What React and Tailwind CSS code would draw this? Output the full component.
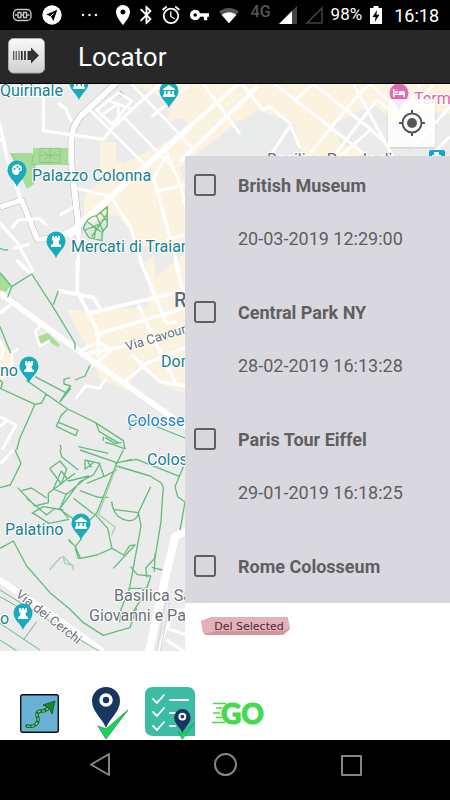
import React from 'react';

const places = [
  { name: "British Museum", date: "20-03-2019 12:29:00" },
  { name: "Central Park NY", date: "28-02-2019 16:13:28" },
  { name: "Paris Tour Eiffel", date: "29-01-2019 16:18:25" },
  { name: "Rome Colosseum" },
];

const StatusBar = () => (
  <div className="flex h-[30px] items-center bg-black pl-3 pr-[11px] font-['Roboto',sans-serif] text-white">
    <div className="flex items-center gap-[10px]">
      <svg className="w-5 h-5" viewBox="0 0 20 20" fill="none" stroke="#c9c9c9" strokeWidth="1.3">
        <rect x="1.5" y="4.5" width="17.5" height="11" rx="4" />
        <path d="M3 10h3M14.500 10h3M6 7.500h3v5H6zM11.500 7.500h3v5h-3zM9 10h2.500" />
      </svg>
      <svg className="w-5 h-5" viewBox="0 0 20 20">
        <circle cx="10" cy="10" r="9.7" fill="#fff" />
        <path d="M15.300 4.800 4.300 9.500l4.500 1.900 2.600 4.600z" fill="#000" />
        <path d="m8.600 11.400 3-3" stroke="#fff" strokeWidth="1" />
      </svg>
      <svg className="w-[34px] h-5" viewBox="0 0 34 20" fill="#fff">
        <circle cx="11" cy="10" r="1.2" />
        <circle cx="17.500" cy="10" r="1.2" />
        <circle cx="24" cy="10" r="1.2" />
      </svg>
      <svg className="w-[14px] h-5" viewBox="5 2 14 20" fill="#fff">
        <path d="M12 2C8.130 2 5 5.130 5 9c0 5.250 7 13 7 13s7-7.750 7-13c0-3.870-3.130-7-7-7zm0 9.500a2.500 2.500 0 1 1 0-5 2.500 2.500 0 0 1 0 5z" />
      </svg>
      <svg className="w-3 h-5" viewBox="5 2 13 20" fill="#fff">
        <path d="M17.710 7.710 12 2h-1v7.590L6.410 5 5 6.410 10.590 12 5 17.590 6.410 19 11 14.410V22h1l5.710-5.710-4.300-4.290 4.300-4.290zM13 5.830l1.880 1.880L13 9.590V5.830zm1.880 10.460L13 18.170v-3.760l1.880 1.880z" />
      </svg>
      <svg className="w-[18px] h-5" viewBox="2 2 20 20" fill="#fff">
        <path d="m22 5.720-4.600-3.860-1.290 1.530 4.600 3.860L22 5.720zM7.880 3.390 6.600 1.860 2 5.710l1.290 1.530 4.590-3.850zM12.500 8H11v6l4.750 2.850.750-1.230-4-2.370V8zM12 4a9 9 0 1 0 0 18 9 9 0 0 0 0-18zm0 16a7 7 0 1 1 0-14 7 7 0 0 1 0 14z" />
      </svg>
      <svg className="w-[19px] h-5" viewBox="1 2 22 20" fill="#fff">
        <path d="M12.650 10A5.990 5.990 0 0 0 7 6c-3.310 0-6 2.690-6 6s2.690 6 6 6a5.990 5.990 0 0 0 5.650-4H17v4h4v-4h2v-4H12.650zM7 14a2 2 0 1 1 0-4 2 2 0 0 1 0 4z" />
      </svg>
      <svg className="w-[20px] h-5" viewBox="0 0 22 20">
        <path d="M0 6.500C6 .800 16 .800 22 6.500L11 19z" fill="#555" />
        <path d="M3 10C7.500 6 14.500 6 19 10l-8 9z" fill="#fff" />
      </svg>
    </div>
    <div className="ml-auto flex items-center gap-2">
      <span className="h-5 text-base font-medium leading-[14px] text-[#555]">4G</span>
      <svg className="w-[18px] h-[18px]" viewBox="0 0 18 18">
        <path d="M0 18 18 0v18z" fill="#444" />
        <path d="M0 18 13 5v13z" fill="#fff" />
      </svg>
      <svg className="w-[18px] h-[18px]" viewBox="0 0 18 18" fill="none" stroke="#444" strokeWidth="1.5">
        <path d="M2 17 17 2v15z" />
      </svg>
      <span className="text-[17px]">98%</span>
      <svg className="w-3 h-[18px]" viewBox="0 0 12 18">
        <path d="M3.500 0h5v2H12v16H0V2h3.500z" fill="#fff" />
        <path d="M7 4 2.500 11h3L4.800 16 9.500 8.800h-3z" fill="#000" />
      </svg>
      <span className="pl-1 text-[18px]">16:18</span>
    </div>
  </div>
);

const AppBar = () => (
  <header className="flex h-[54px] items-center gap-8 border-b border-black bg-[#282828] px-2">
    <svg className="w-[38px] h-[38px]" viewBox="0 0 38 38" aria-hidden="true">
      <defs>
        <linearGradient id="tile" x1="0" y1="0" x2="0" y2="1">
          <stop offset="0" stopColor="#fafafa" />
          <stop offset="1" stopColor="#cfcfcf" />
        </linearGradient>
      </defs>
      <rect x="0.500" y="0.500" width="36" height="34.500" rx="5" fill="url(#tile)" stroke="#aaa" />
      <path d="M5.700 13v9M8.200 13v9M11 13v9" stroke="#333" strokeWidth="1" />
      <path d="M13.800 13v9M17 13v9" stroke="#333" strokeWidth="1.800" />
      <path d="M19.500 13H23V9.500l8 8-8 8V22h-3.500z" fill="#333" />
    </svg>
    <h1 className="font-['Roboto',sans-serif] text-[26px] leading-8 text-white">Locator</h1>
  </header>
);

const Pin = ({ x, y, color = "#16abbd", children }) => (
  <g transform={`translate(${x} ${y})`}>
    <path d="M0 16C-2 10-9.500 6-9.500-1a9.500 9.500 0 0 1 19 0C9.500 6 2 10 0 16z" fill={color} />
    <g fill="#fff">{children}</g>
  </g>
);

const Museum = () => (
  <path d="M-6-3 0-7 6-3v1H-6zM-5-1h2v3h1.500v-3h3v3H3v-3h2v4H-5zM-6 3H6v2H-6z" />
);
const Rook = () => <path d="M-4-6h2v1.500h1V-6h2v1.500h1V-6h2v4L2.500-1 3 2l2 1v2H-5V3l2-1 .500-3L-4-2z" />;

const MapView = () => (
  <svg
    className="absolute inset-0 h-full w-full font-['Roboto',sans-serif]"
    viewBox="0 84 450 567"
    preserveAspectRatio="xMinYMin slice"
    role="img"
    aria-label="Map of Rome"
  >
    <rect y="84" width="450" height="567" fill="#ebebeb" />

    {/* built-up areas */}
    <g fill="#fbf2df">
      <path d="M133 84h317v30l-35-6-12 20-30-24-40 20 8 20 26 8-30 14H220l40-34-20-12-60 48 6 20v60l-42-2-28-32-32 10 0-28 16-14V142h16v18l8 4 22-12 12-6 34-18-10-10-16 4 8-20z" />
      <path d="m66 310 28 0 54-3 2-25 36-30v142l-20-8-30-20-8 24-28-10-10-28z" />
      <path d="m0 344 12 8 4 22-16 6zM145 262l10-6v24h-8z" />
    </g>
    <path d="m190 160 68-50 36 14 10 34-30 10h-84z" fill="#e9eaea" />

    {/* parks */}
    <g fill="#a9dc98">
      <path d="M10 153h23v-5h35v16H36l-2 20-7 5z" />
      <path d="m0 273 11 12-5 7-6-2z" />
      <path d="m37 337 11-4 12 12-2 2-10-6-6 4z" />
    </g>
    <path d="M84 222 90 227l12-8 6-12-1 21-5 12-16-4z" fill="#dbe8db" />
    <path d="m120 90 4 4-1 3-4-1z" fill="#8cc8ee" />

    {/* streets */}
    <g transform="translate(0 80) scale(.33333)" fill="none" stroke="#fff" strokeLinejoin="round">
      <g stroke="#b9b9b9" strokeWidth="21">
        <path d="M350 8 242 108Q213 145 214 185v65l20 175v40" />
        <path d="M0 382 64 360l48 118 60-4" strokeWidth="19" />
      </g>
      <path d="M350 8 242 108Q213 145 214 185v65l20 175v40" strokeWidth="18" />
      <path d="M0 382 64 360l48 118 60-4 62-32" strokeWidth="16" />
      <path d="M570 140 235 436 205 470" strokeWidth="18" />
      <path d="M130 12v140l180 26 32-40L480 12M0 130 20 230l42 130M0 180h12M175 70l22 16 18 40" strokeWidth="10" />
      <path d="m270 90 165 165M372 112l135 140M395 12l180 190M290 90l65-52 40 25-60 70zM300 110l55-40v65M320 60l75 28" strokeWidth="8" />
      <path d="m455 110 110-90M230 325l100 24 60 90 42 130M460 290l80 290M500 222l40 90 30 120M455 305l50-90M465 335l100-22M500 480l70-20" strokeWidth="9" />
      <path d="m180 405 50-28M0 430l50 55 50 90M35 445l18-24 65-5 24 22M40 505l50-12M235 460v110" strokeWidth="9" />
    </g>
    <g transform="translate(0 260) scale(.33333)" fill="none" stroke="#fff" strokeLinejoin="round">
      <path d="M0 100 260 290 570 510" strokeWidth="17" />
      <path d="M232 0v95l35 65 28 60v70M50 0l45 45M0 160l30-25M175 92l105 20 20 32M265 160l300-70M285 225l280-85" strokeWidth="11" />
      <path d="m240 285 150-30 180-55M235 275l60-30 40 25-60 50M420 0l80 190 30-5M525 0l30 120M415 135l55 120 60 120M395 285l85 80 90 15M370 370l70-60 120-50" strokeWidth="10" />
      <path d="m120 200-15 14 15 45 30-18M320 355l-22 30-40-8-32 40M0 240l10 30-8 30M35 330v-50l20-14" strokeWidth="8" />
      <path d="m0 470 48 25-42 75M0 500l20-18" strokeWidth="9" />
    </g>
    <g transform="translate(0 450) scale(.33333)" fill="none" stroke="#fff" strokeLinejoin="round">
      <path d="M575 235 525 260 490 410 445 615" strokeWidth="24" />
      <path d="M-5 388 150 490l160 115" strokeWidth="18" />
      <path d="M0 42 40 0M470 615l30-80 60 20M500 540l20-60h50M500 570l60 40" strokeWidth="9" />
      <path d="m500 440-30 170M510 450l-30 160" stroke="#d5d5d5" strokeWidth="3" />
    </g>
    <g transform="translate(180 80) scale(.33333)" fill="none" stroke="#fff" strokeLinejoin="round">
      <path d="M0 165 175 12M0 245 235 18" strokeWidth="12" />
      <path d="m70 12 110 150M185 12l65 78 20-10 60 50 30 75M285 12l230 180 50 40M345 60 400 12M400 12l165 130 60 55M520 12l120 220M275 220l60-90M390 220l140-170 40-38M460 230l130-170M570 12l100 90 50-90M480 230l90-80M590 60l40 30M700 200l110-120M760 12l-80 110M750 230l60-60" strokeWidth="9" />
    </g>

    {/* footpaths */}
    <g fill="none" stroke="#62bd7b" strokeLinejoin="round">
      <g transform="translate(0 80) scale(.33333)" strokeWidth="4">
        <path d="M250 445q10-35 40-38l32-27v58l-16 18v26l-40-10zM262 425l40 30M290 407l20 50M275 470l45-65M255 450l50-20M300 395l22 30M282 480l6-40" />
        <path d="M120 205h60v42h-60zM130 215l40 24M170 215l-40 24M150 205v42M120 226h60M100 225l-5 28h115M35 220l15 30" strokeWidth="2" stroke="#83bd7c" />
        <path d="M0 505q15 8 24 4" />
      </g>
      <g transform="translate(0 260) scale(.33333)" strokeWidth="4">
        <path d="m0 38 35 42-12 32M35 80l60-38 60 92 70 115v20M175 92l-15 42M0 200l32 80" />
        <path d="m78 360 60 42 65 45 82 40 85 55 5 25-40-15-20-5M105 350l92 48-18 28M197 398l15-20-20-6v-14l18-5M212 385l-30 38M225 360l30-12 15-32M0 385l105 48 20-4 14-28M105 433l-45 100-10 37M0 360l8 8-6 18M203 447l-20 20-14 32 58 28 7-16-58-24M288 490l10 25 60 35M315 532l30 18 20-2M235 560l90 20M180 555l4 15M390 510v-25l30-5 150 60M310 530v12" />
      </g>
      <g transform="translate(0 450) scale(.33333)" strokeWidth="4">
        <path d="m45 0 18 40-32 65-31 8M180 0l5 20 50 40M240 0l110 38 60-10 130 52M370 0l-20 40-60 150-40 40M395 28l-50 12M350 48l100 30 30 18q14 10 8 38l-5 80-18 110-28 30 4 28M550 50l-25 60 8 30 22 16-15 85" />
        <path d="M150 55l30-22 20 24-16 45-34-45zM184 62l-24 55 40 16 66-55-60 15-22-30M225 70l-80 60v28l-40 10-52-55M65 122l30-8 45 30M80 145l60 50 25-20M95 190l35-20 60 10M97 188l50 32 60-12M180 175l60-80 40-20 20-35-45-10v28l25-20M175 175l50 35M200 130l-20 45 25 30M260 30l15 22M300 45l12 35 38-20M220 145l60 46M240 122l55 20 30 0M310 80l-50 20" />
        <path d="M283 190l40 45 13 60 35 20 18-28M336 295l-45 20-50 10-15-35M245 265l-19 25-20-22M205 270l10 10M245 325h-10l-9-30M389 287l16-2-65 70M335 155q5 50 50 57 25 2 32-25M340 178l75 10 37-78M415 188l8 40-35 190-25 60-4 40M392 350l20 24 40 4-15 50-40 60M385 415l55 0 12-36M465 310l-2 55M455 352l32 8" />
        <path d="m0 295 40-22 40 75 70 80 60 50 40 40 60 38 50-15 30-8 20-60" />
        <path d="M0 420l200 125 100 60M0 440l70 40M0 520l120 80M110 515l-40 55M0 570l50 32" strokeWidth="3" />
        <path d="m148 360 32-36 10-4 30 30v12M190 325l5 16 25 5M350 48l-55 145 50 38-10 25" stroke="#a5cfae" />
      </g>
    </g>

    <path d="M431 150h12q2 0 2 2v12h-16v-12q0-2 2-2z" fill="#0ea5dc" />
    <path d="M434 152h5v3h-5zM432 155h9v1h-9z" fill="#fff" />

    <g stroke="#fff" strokeWidth="2" strokeLinejoin="round" style={{ paintOrder: "stroke" }}>
      <g fill="#16818f" fontSize="16">
        <text x="0" y="96">Quirinale</text>
        <text x="32" y="181">Palazzo Colonna</text>
        <text x="71" y="252">Mercati di Traian</text>
        <text x="161" y="367">Dom</text>
        <text x="0" y="376">no</text>
        <text x="147" y="465">Colos</text>
        <text x="5" y="535">Palatino</text>
        <text x="0" y="624">o</text>
      </g>
      <text x="127" y="426" fill="#1a84bd" fontSize="16">Colosse</text>
      <text x="174" y="307" fill="#5a6a7d" fontSize="20" fontWeight="500">R</text>
      <g fill="#666f77">
        <text x="114" y="601" fontSize="16">Basilica Sa</text>
        <text x="89" y="621" fontSize="16">Giovanni e Pa</text>
        <text x="267" y="165" fontSize="16">Basilica Papale di</text>
        <text transform="translate(127 351) rotate(-17)" fontSize="13">Via Cavour</text>
        <text transform="translate(15 596) rotate(38)" fontSize="13">Via dei Cerchi</text>
      </g>
      <text x="414" y="104" fill="#d967a8" fontSize="16">Term</text>
    </g>

    <Pin x={79} y={84}><Museum /></Pin>
    <Pin x={169} y={92}><Museum /></Pin>
    <Pin x={17} y={171}>
      <path d="M-5-1c0-7 10-7 10-1 0 3-3 1-3 4S-5 5-5-1z" />
      <g fill="#16abbd">
        <circle cx="-2.500" cy="-2" r="1" />
        <circle cx="0.500" cy="-4" r="1" />
        <circle cx="2.500" cy="-2" r="1" />
      </g>
    </Pin>
    <Pin x={56} y={242}><Rook /></Pin>
    <Pin x={29} y={367}><Rook /></Pin>
    <Pin x={81} y={524}><Museum /></Pin>
    <Pin x={23} y={614}><Rook /></Pin>
    <Pin x={399} y={94} color="#df6bb0">
      <path d="M-6-5h1.500v5H0v-3h4q2 0 2 2v4H4.500V1h-9v2H-6z" />
      <circle cx="-2.500" cy="-2" r="1.500" />
    </Pin>
  </svg>
);

const PlaceList = () => (
  <ul className="h-[447px] overflow-hidden bg-[#d9d8df] font-['Roboto',sans-serif] text-lg text-[#5f5f62]">
    {places.map((place) => (
      <li key={place.name} className="h-[127px] pl-[9px] pt-[18px]">
        <label className="flex gap-[22px]">
          <input
            type="checkbox"
            className="h-[22px] w-[22px] shrink-0 appearance-none rounded-[3px] border-2 border-[#5f5f62] checked:bg-[#5f5f62]"
          />
          <span className="flex flex-col gap-[29px] leading-6">
            <span className="font-bold">{place.name}</span>
            {place.date && <span>{place.date}</span>}
          </span>
        </label>
      </li>
    ))}
  </ul>
);

const DeleteButton = () => (
  <button className="relative block h-[19px] w-[90px] pl-2 text-center font-['DejaVu_Sans',sans-serif] text-[11px] leading-[14px] text-[#4a2a35]">
    <svg className="absolute inset-0 h-full w-full" viewBox="0 0 90 19" aria-hidden="true">
      <path d="M1 4 12 0h74q2 0 2 2l2 10-7 6H6q-2 0-3-3z" fill="#d3959c" />
      <path d="M1 4 12 0h74q2 0 2 2l2 9-6 3H16L4 17z" fill="#e5b1b8" />
    </svg>
    <span className="relative block whitespace-nowrap">Del Selected</span>
  </button>
);

const CheckedPin = ({ className }) => (
  <svg className={className} viewBox="0 0 37 53" aria-hidden="true">
    <path d="M14 41C11 32 0 25 0 14a14 14 0 0 1 28 0c0 11-11 18-14 27z" fill="#17375e" />
    <circle cx="14" cy="13" r="5" fill="none" stroke="#fff" strokeWidth="3.500" />
    <path d="m6 39 8 3 22-19-22 29z" fill="#19d45c" stroke="#178a3c" strokeWidth="0.700" strokeLinejoin="round" />
  </svg>
);

const Toolbar = () => (
  <div className="flex h-[89px] items-end bg-white pl-5">
    <button aria-label="Route" className="mb-[7px] h-[39px] w-[39px]">
      <svg viewBox="0 0 39 39">
        <rect x="0.700" y="0.700" width="37.600" height="37.600" rx="2" fill="#68b0d4" stroke="#111" strokeWidth="1.400" />
        <path d="M7 32c6 1 9 0 11-5 1-4-3-6 0-9 4-3 6 2 11-5" fill="none" stroke="#14682a" strokeWidth="3.500" strokeLinecap="round" />
        <path d="M7 32c6 1 9 0 11-5 1-4-3-6 0-9 4-3 6 2 11-5" fill="none" stroke="#a4e08c" strokeWidth="1.200" strokeDasharray="3 1.500" />
        <path d="m35 7-12 4 4 2 2 1 3 6z" fill="#14862c" stroke="#14682a" />
      </svg>
    </button>
    <button aria-label="Mark position" className="ml-[33px]">
      <CheckedPin className="h-[53px] w-[37px]" />
    </button>
    <button aria-label="Saved places" className="relative ml-4 h-[53px] w-[51px]">
      <svg viewBox="0 0 51 53">
        <path d="M8 0h34q8 0 8 8v41H8q-8 0-8-8V8q0-8 8-8z" fill="#3cbba5" />
        <g fill="none" stroke="#fff" strokeWidth="1.800" strokeLinecap="round" strokeLinejoin="round">
          <path d="m8 12 4 4 7-8M8 25l4 4 7-8M8 39l4 4 7-8M25 13h18M25 26h5M25 39h5" />
        </g>
      </svg>
      <CheckedPin className="absolute bottom-0 right-0 h-[31px] w-[22px]" />
    </button>
    <button
      aria-label="GO"
      className="mb-[11px] ml-4 flex items-center font-['Lato',sans-serif] text-[28px] font-black leading-8 text-[#45d94c] [-webkit-text-stroke:1px_#45d94c]"
    >
      <svg className="h-[22px] w-[9px] overflow-visible" viewBox="0 0 9 22" stroke="#45d94c" strokeWidth="1.600">
        <path d="M1 1.500h13M4 6h6M1 11h7M4 15.500h6M0 20.500h13" />
      </svg>
      GO
    </button>
  </div>
);

const NavBar = () => (
  <nav className="grid h-[60px] grid-cols-3 items-start justify-items-center bg-black px-[38px] pt-3">
    <button aria-label="Back">
      <svg className="h-6 w-6" viewBox="0 0 24 24" fill="none" stroke="#858585" strokeWidth="2" strokeLinejoin="round">
        <path d="M21 2v21L3 12.500z" />
      </svg>
    </button>
    <button aria-label="Home">
      <svg className="h-6 w-6" viewBox="0 0 24 24" fill="none" stroke="#858585" strokeWidth="2">
        <circle cx="12.500" cy="12.500" r="10.500" />
      </svg>
    </button>
    <button aria-label="Recent apps">
      <svg className="h-6 w-6" viewBox="0 0 24 24" fill="none" stroke="#858585" strokeWidth="2" strokeLinejoin="round">
        <rect x="4" y="4" width="19" height="19" />
      </svg>
    </button>
  </nav>
);

const App = () => {
  return (
    <div className="bg-white">
      <StatusBar />
      <AppBar />
      <main className="relative overflow-hidden">
        <MapView />
        <button
          aria-label="My location"
          className="absolute right-[15px] top-[15px] flex h-12 w-[47px] items-center justify-center rounded-[2px] bg-white/85 shadow"
        >
          <svg className="h-7 w-7" viewBox="0 0 28 28" fill="none" stroke="#555" strokeWidth="2">
            <circle cx="14" cy="14" r="9.500" />
            <circle cx="14" cy="14" r="5" fill="#555" stroke="none" />
            <path d="M14 1v4M14 23v4M1 14h4M23 14h4" />
          </svg>
        </button>
        <section className="relative ml-[185px] mt-[72px] bg-white">
          <PlaceList />
          <div className="h-12 pl-[15px] pt-[14px]">
            <DeleteButton />
          </div>
        </section>
      </main>
      <Toolbar />
      <NavBar />
    </div>
  );
};

export default App;
